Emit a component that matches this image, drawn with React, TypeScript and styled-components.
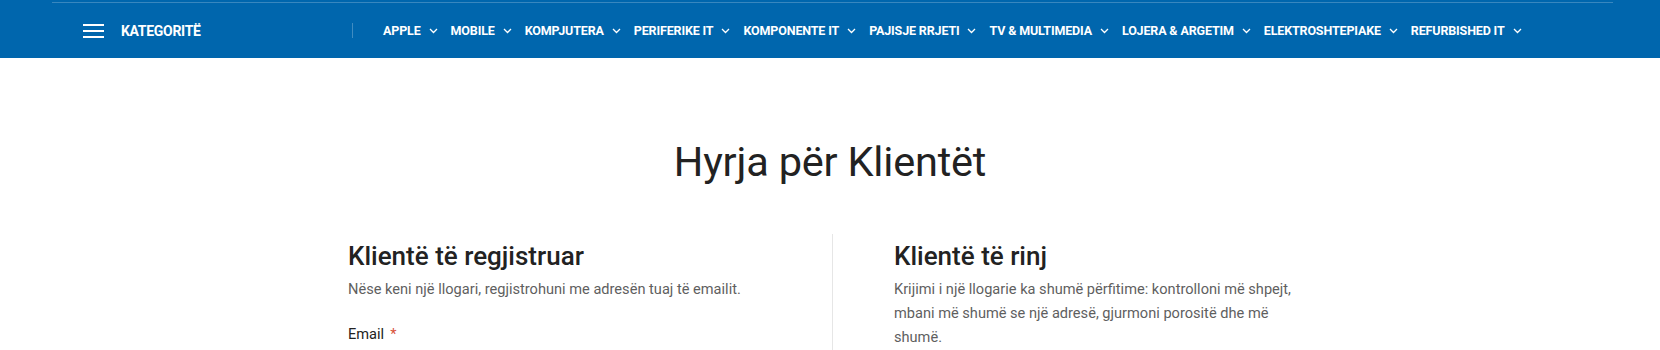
import React from "react";
import styled, { createGlobalStyle } from "styled-components";

const GlobalStyle = createGlobalStyle`
  html, body { margin: 0; padding: 0; background: #fff; }
  body { font-family: "Roboto", "Noto Sans", sans-serif; color: #222; }
  * { box-sizing: border-box; }
`;

const Header = styled.header`
  background: #0066ad;
  height: 58px;
  padding-top: 2px;
`;

const HeaderInner = styled.div`
  width: 1561px;
  margin: 0 0 0 52px;
  border-top: 1px solid rgba(255, 255, 255, 0.22);
  height: 56px;
  display: flex;
  align-items: center;
  padding-left: 31px;
`;

const Categories = styled.div`
  width: 269px;
  display: flex;
  align-items: center;
  gap: 17px;
`;

const Burger = styled.span`
  width: 21px;
  height: 14px;
  display: flex;
  flex-direction: column;
  justify-content: space-between;
  & > i {
    display: block;
    height: 2px;
    background: #fff;
  }
`;

const NavLabel = styled.span<{ $big?: boolean }>`
  font-family: "Roboto", "Liberation Sans", sans-serif;
  font-weight: 700;
  font-size: ${(p) => (p.$big ? "14px" : "12.5px")};
  letter-spacing: ${(p) => (p.$big ? "-0.3px" : "-0.15px")};
  color: #fff;
  text-transform: uppercase;
  white-space: nowrap;
`;

const Divider = styled.span`
  width: 1px;
  height: 15px;
  background: rgba(255, 255, 255, 0.25);
  margin-right: 30px;
`;

const Nav = styled.nav`
  display: flex;
  align-items: center;
  gap: 13px;
`;

const NavItem = styled.span`
  display: flex;
  align-items: center;
  gap: 8px;
`;

const Chevron = () => (
  <svg width="9" height="6" viewBox="0 0 9 6" fill="none">
    <path d="M1 1l3.5 3.5L8 1" stroke="#fff" strokeWidth="1.3" />
  </svg>
);

const Main = styled.main`
  padding-top: 78px;
`;

const Title = styled.h1`
  margin: 0;
  text-align: center;
  font-weight: 400;
  font-size: 41.5px;
  line-height: 52px;
  color: #222;
  letter-spacing: -0.2px;
`;

const Columns = styled.div`
  width: 964px;
  margin: 46px 0 0 348px;
  display: grid;
  grid-template-columns: 484px 1fr;
`;

const Column = styled.section<{ $divided?: boolean }>`
  padding-left: ${(p) => (p.$divided ? "61px" : "0")};
  border-left: ${(p) => (p.$divided ? "1px solid #e6e6e6" : "none")};
  padding-top: 6px;
  min-height: 120px;
`;

const Heading = styled.h2`
  margin: 0;
  font-weight: 500;
  font-size: 26px;
  line-height: 32px;
  color: #222;
`;

const Text = styled.p`
  margin: 6px 0 0;
  font-size: 14.6px;
  line-height: 23.8px;
  color: #5f5f5f;
  max-width: 410px;
`;

const Label = styled.label`
  display: block;
  margin-top: 22px;
  font-size: 14.6px;
  line-height: 20px;
  color: #222;
  & > em {
    font-style: normal;
    color: #d8523b;
    margin-left: 6px;
  }
`;

const items = [
  "Apple",
  "Mobile",
  "Kompjutera",
  "Periferike IT",
  "Komponente IT",
  "Pajisje Rrjeti",
  "TV & Multimedia",
  "Lojera & Argetim",
  "Elektroshtepiake",
  "Refurbished IT",
];

export default function App() {
  return (
    <>
      <GlobalStyle />
      <Header>
        <HeaderInner>
          <Categories>
            <Burger>
              <i />
              <i />
              <i />
            </Burger>
            <NavLabel $big>Kategoritë</NavLabel>
          </Categories>
          <Divider />
          <Nav>
            {items.map((it) => (
              <NavItem key={it}>
                <NavLabel>{it}</NavLabel>
                <Chevron />
              </NavItem>
            ))}
          </Nav>
        </HeaderInner>
      </Header>
      <Main>
        <Title>Hyrja për Klientët</Title>
        <Columns>
          <Column>
            <Heading>Klientë të regjistruar</Heading>
            <Text>Nëse keni një llogari, regjistrohuni me adresën tuaj të emailit.</Text>
            <Label>
              Email<em>*</em>
            </Label>
          </Column>
          <Column $divided>
            <Heading>Klientë të rinj</Heading>
            <Text>
              Krijimi i një llogarie ka shumë përfitime: kontrolloni më shpejt, mbani më shumë se një
              adresë, gjurmoni porositë dhe më shumë.
            </Text>
          </Column>
        </Columns>
      </Main>
    </>
  );
}
